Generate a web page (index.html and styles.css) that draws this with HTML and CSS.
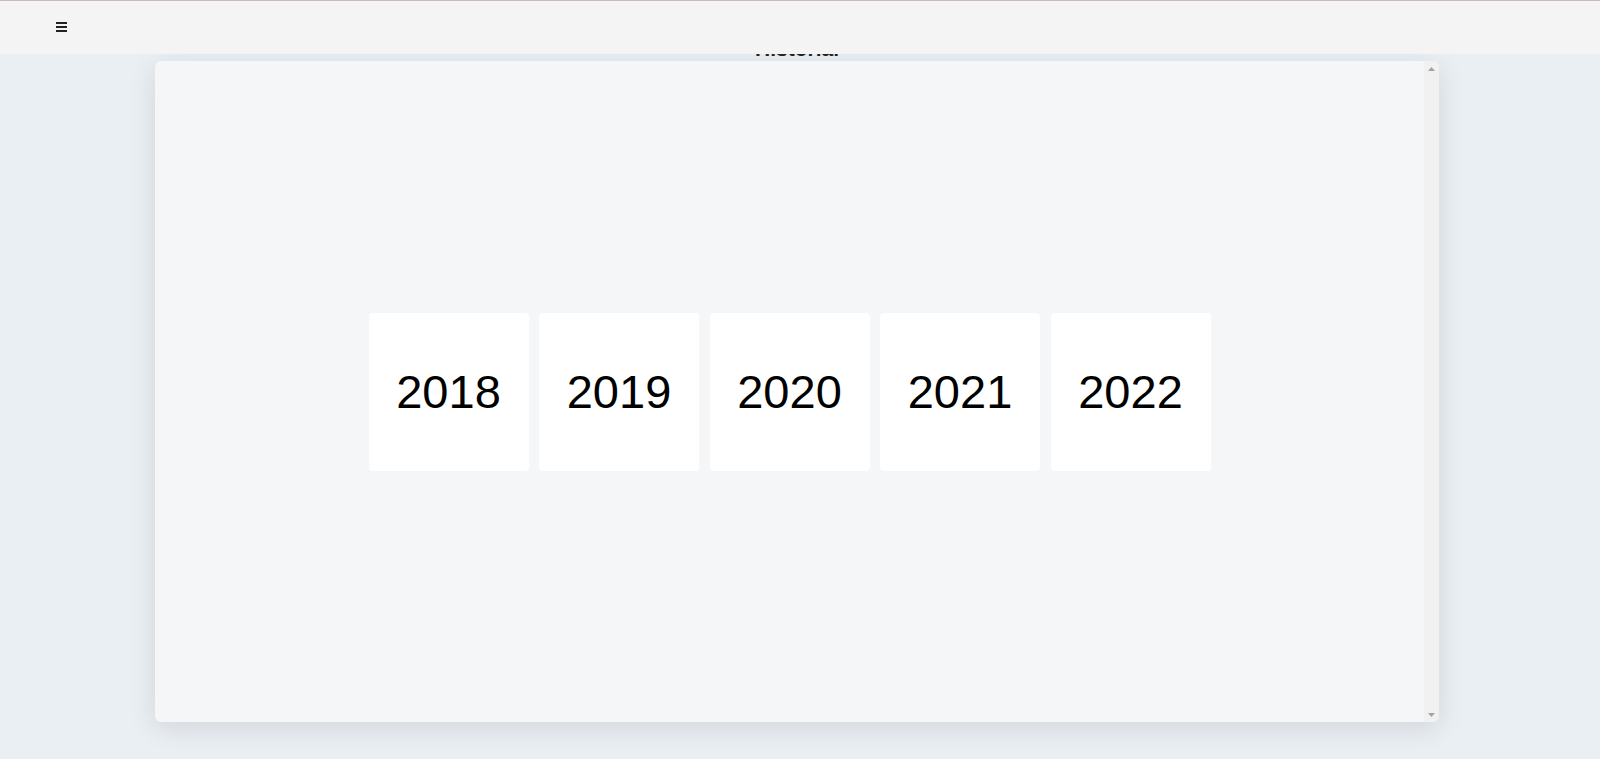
FILE: index.html
```html
<!DOCTYPE html>
<html lang="es">
<head>
<meta charset="utf-8">
<title>Historial</title>
<link rel="stylesheet" href="styles.css">
</head>
<body>
<header class="topbar">
  <button class="menu-btn" aria-label="Menú">
    <svg width="11" height="10" viewBox="0 0 11 10"><rect x="0" y="0" width="11" height="2" fill="#222"/><rect x="0" y="4" width="11" height="2" fill="#222"/><rect x="0" y="8" width="11" height="2" fill="#222"/></svg>
  </button>
</header>
<main class="page">
  <h1 class="title">Historial</h1>
  <section class="panel">
    <div class="panel-body">
      <div class="years">
        <div class="year-card">2018</div>
        <div class="year-card">2019</div>
        <div class="year-card">2020</div>
        <div class="year-card">2021</div>
        <div class="year-card">2022</div>
      </div>
    </div>
    <div class="scrollbar" aria-hidden="true">
      <div class="sb-btn"><svg width="7" height="4" viewBox="0 0 7 4"><polygon points="0,4 7,4 3.5,0" fill="#a3a3a3"/></svg></div>
      <div class="sb-track"></div>
      <div class="sb-btn"><svg width="7" height="4" viewBox="0 0 7 4"><polygon points="0,0 7,0 3.5,4" fill="#a3a3a3"/></svg></div>
    </div>
  </section>
</main>
</body>
</html>
```

FILE: styles.css
```css
html, body {
  margin: 0;
  padding: 0;
}
body {
  background: #eaeff3;
  font-family: "Liberation Sans", Arial, sans-serif;
  color: #000;
  height: 759px;
  overflow: hidden;
}
.topbar {
  position: fixed;
  top: 0;
  left: 0;
  right: 0;
  height: 53px;
  background: #f4f4f4;
  border-top: 1px solid #c9b8bc;
  z-index: 10;
  display: flex;
  align-items: center;
}
.menu-btn {
  margin-left: 56px;
  margin-top: -1px;
  padding: 0;
  border: 0;
  background: none;
  display: flex;
  line-height: 0;
}
.page {
  padding-top: 37px;
  margin-left: 155px;
  width: 1284px;
}
.title {
  margin: 0;
  font-size: 21px;
  line-height: 24px;
  font-weight: bold;
  text-align: center;
  color: #222;
}
.panel {
  height: 661px;
  background: #f5f6f8;
  border-radius: 6px;
  box-shadow: 0 6px 28px rgba(0, 0, 0, 0.11);
  overflow: hidden;
  display: flex;
}
.panel-body {
  flex: 1;
  display: flex;
  align-items: center;
  justify-content: center;
}
.scrollbar {
  width: 15px;
  background: #f1f1f1;
  display: flex;
  flex-direction: column;
}
.sb-btn {
  height: 15px;
  display: flex;
  align-items: center;
  justify-content: center;
}
.sb-track {
  flex: 1;
}
.years {
  display: flex;
  gap: 10.5px;
}
.year-card {
  width: 160px;
  height: 158px;
  background: #fff;
  border-radius: 4px;
  display: flex;
  align-items: center;
  justify-content: center;
  font-size: 47px;
}
```
